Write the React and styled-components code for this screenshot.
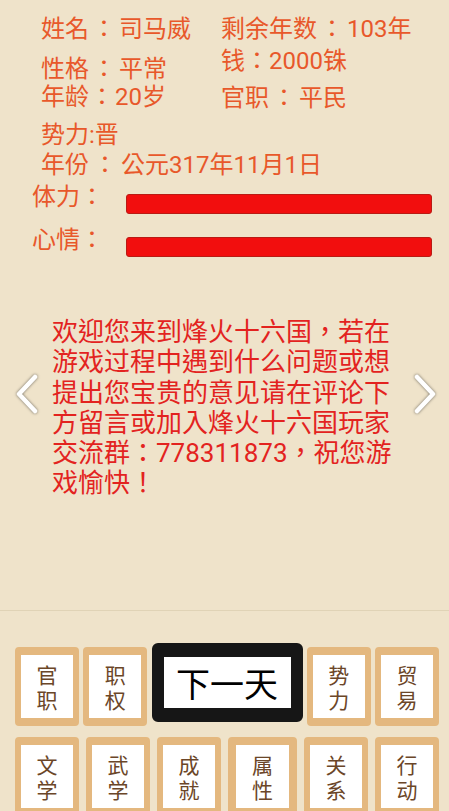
import React from "react";
import styled, { createGlobalStyle } from "styled-components";

const Global = createGlobalStyle`
  html, body { margin: 0; padding: 0; background: #efe3ca; }
  body { font-family: Roboto, "Noto Sans CJK TC", "Noto Sans CJK SC", sans-serif; }
  * { box-sizing: border-box; }
`;

const Page = styled.div`
  width: 449px;
  min-height: 811px;
  background: #efe3ca;
  overflow: hidden;
`;

const InfoGrid = styled.div`
  display: flex;
  padding: 15px 0 0 41px;
`;

const Col = styled.div`
  width: ${(p) => p.$w || "auto"};
`;

const Line = styled.div`
  font-size: 24px;
  line-height: 28px;
  color: #e8582a;
  white-space: nowrap;
  margin-top: ${(p) => p.$mt || 0}px;
  padding-left: ${(p) => p.$pl || 0}px;
`;

const Colon = styled.span`
  margin: 0 ${(p) => (p.$gap === undefined ? 3 : p.$gap)}px;
`;

const StatRow = styled.div`
  display: flex;
  align-items: flex-start;
  padding: 0 17px 0 32px;
  margin-top: ${(p) => p.$mt}px;
`;

const StatLabel = styled.div`
  width: 94px;
  font-size: 24px;
  line-height: 28px;
  color: #e8582a;
`;

const Bar = styled.div`
  flex: 1;
  height: 20px;
  margin-top: 11px;
  border: 1px solid #b91b14;
  border-radius: 3px;
  background: #f20e0e;
`;

const Carousel = styled.div`
  display: flex;
  align-items: flex-start;
  height: 354px;
  padding-top: 60px;
  border-bottom: 1px solid #e0d3b6;
`;

const ArrowSlot = styled.div`
  width: ${(p) => p.$w}px;
  padding-left: ${(p) => p.$pl}px;
  margin-top: 56px;
  display: flex;
`;

const ArrowSvg = styled.svg`
  width: 26px;
  height: 42px;
  filter: drop-shadow(0 0 1.5px rgba(0, 0, 0, 0.55));
`;

const Message = styled.div`
  width: 345px;
  font-size: 26px;
  line-height: 30.3px;
  color: #e3231f;
`;

const ButtonArea = styled.div`
  padding: 32px 10px 0 15px;
`;

const BtnRow = styled.div`
  display: flex;
  justify-content: space-between;
  align-items: flex-start;
  margin-top: ${(p) => p.$mt || 0}px;
`;

const SmallBtn = styled.button`
  width: ${(p) => p.$w || 64}px;
  height: 79px;
  margin-top: ${(p) => p.$mt || 0}px;
  padding: 0;
  border-style: solid;
  border-color: #e4b87f;
  border-width: 8px ${(p) => (p.$w ? 8 : 6)}px;
  border-radius: 4px;
  background: #ffffff;
  color: #6b4628;
  font-family: "Noto Sans CJK TC", "Noto Sans CJK SC", sans-serif;
  font-size: 21px;
  line-height: 25px;
  display: flex;
  flex-direction: column;
  align-items: center;
  justify-content: center;
`;

const BigBtn = styled.button`
  width: 151px;
  height: 79px;
  padding: 0;
  border-style: solid;
  border-color: #161616;
  border-width: 14px 12px;
  border-radius: 6px;
  background: #ffffff;
  color: #000;
  font-family: "Noto Sans CJK TC", "Noto Sans CJK SC", sans-serif;
  font-size: 34px;
  line-height: 40px;
  display: flex;
  align-items: center;
  justify-content: center;
`;

function Chevron({ dir }) {
  const d = dir === "left" ? "M20 4 L4 21 L20 38" : "M6 4 L22 21 L6 38";
  return (
    <ArrowSvg viewBox="0 0 26 42">
      <path
        d={d}
        fill="none"
        stroke="#ffffff"
        strokeWidth="4.5"
        strokeLinecap="round"
        strokeLinejoin="round"
      />
    </ArrowSvg>
  );
}

function Small({ a, b, w, mt }) {
  return (
    <SmallBtn $w={w} $mt={mt}>
      <span>{a}</span>
      <span>{b}</span>
    </SmallBtn>
  );
}

export default function App() {
  return (
    <Page>
      <Global />
      <InfoGrid>
        <Col $w="180px">
          <Line>
            姓名<Colon>：</Colon>司马威
          </Line>
          <Line $mt={12}>
            性格<Colon>：</Colon>平常
          </Line>
          <Line>
            年龄<Colon $gap={1}>：</Colon>20岁
          </Line>
        </Col>
        <Col>
          <Line>
            剩余年数<Colon>：</Colon>103年
          </Line>
          <Line $mt={4}>
            钱<Colon $gap={0}>：</Colon>2000铢
          </Line>
          <Line $mt={9}>
            官职<Colon>：</Colon>平民
          </Line>
        </Col>
      </InfoGrid>
      <Line $mt={9} $pl={41}>
        势力:晋
      </Line>
      <Line $mt={2} $pl={41}>
        年份<Colon $gap={4}>：</Colon>公元317年11月1日
      </Line>
      <StatRow $mt={4}>
        <StatLabel>体力：</StatLabel>
        <Bar />
      </StatRow>
      <StatRow $mt={12}>
        <StatLabel>心情：</StatLabel>
        <Bar />
      </StatRow>
      <Carousel>
        <ArrowSlot $w={52} $pl={15}>
          <Chevron dir="left" />
        </ArrowSlot>
        <Message>
          欢迎您来到烽火十六国，若在游戏过程中遇到什么问题或想提出您宝贵的意见请在评论下方留言或加入烽火十六国玩家交流群：778311873，祝您游戏愉快！
        </Message>
        <ArrowSlot $w={52} $pl={14}>
          <Chevron dir="right" />
        </ArrowSlot>
      </Carousel>
      <ButtonArea>
        <BtnRow>
          <Small a="官" b="职" mt={4} />
          <Small a="职" b="权" mt={4} />
          <BigBtn>下一天</BigBtn>
          <Small a="势" b="力" mt={4} />
          <Small a="贸" b="易" mt={4} />
        </BtnRow>
        <BtnRow $mt={11}>
          <Small a="文" b="学" />
          <Small a="武" b="学" />
          <Small a="成" b="就" />
          <Small a="属" b="性" w={69} />
          <Small a="关" b="系" />
          <Small a="行" b="动" />
        </BtnRow>
      </ButtonArea>
    </Page>
  );
}
